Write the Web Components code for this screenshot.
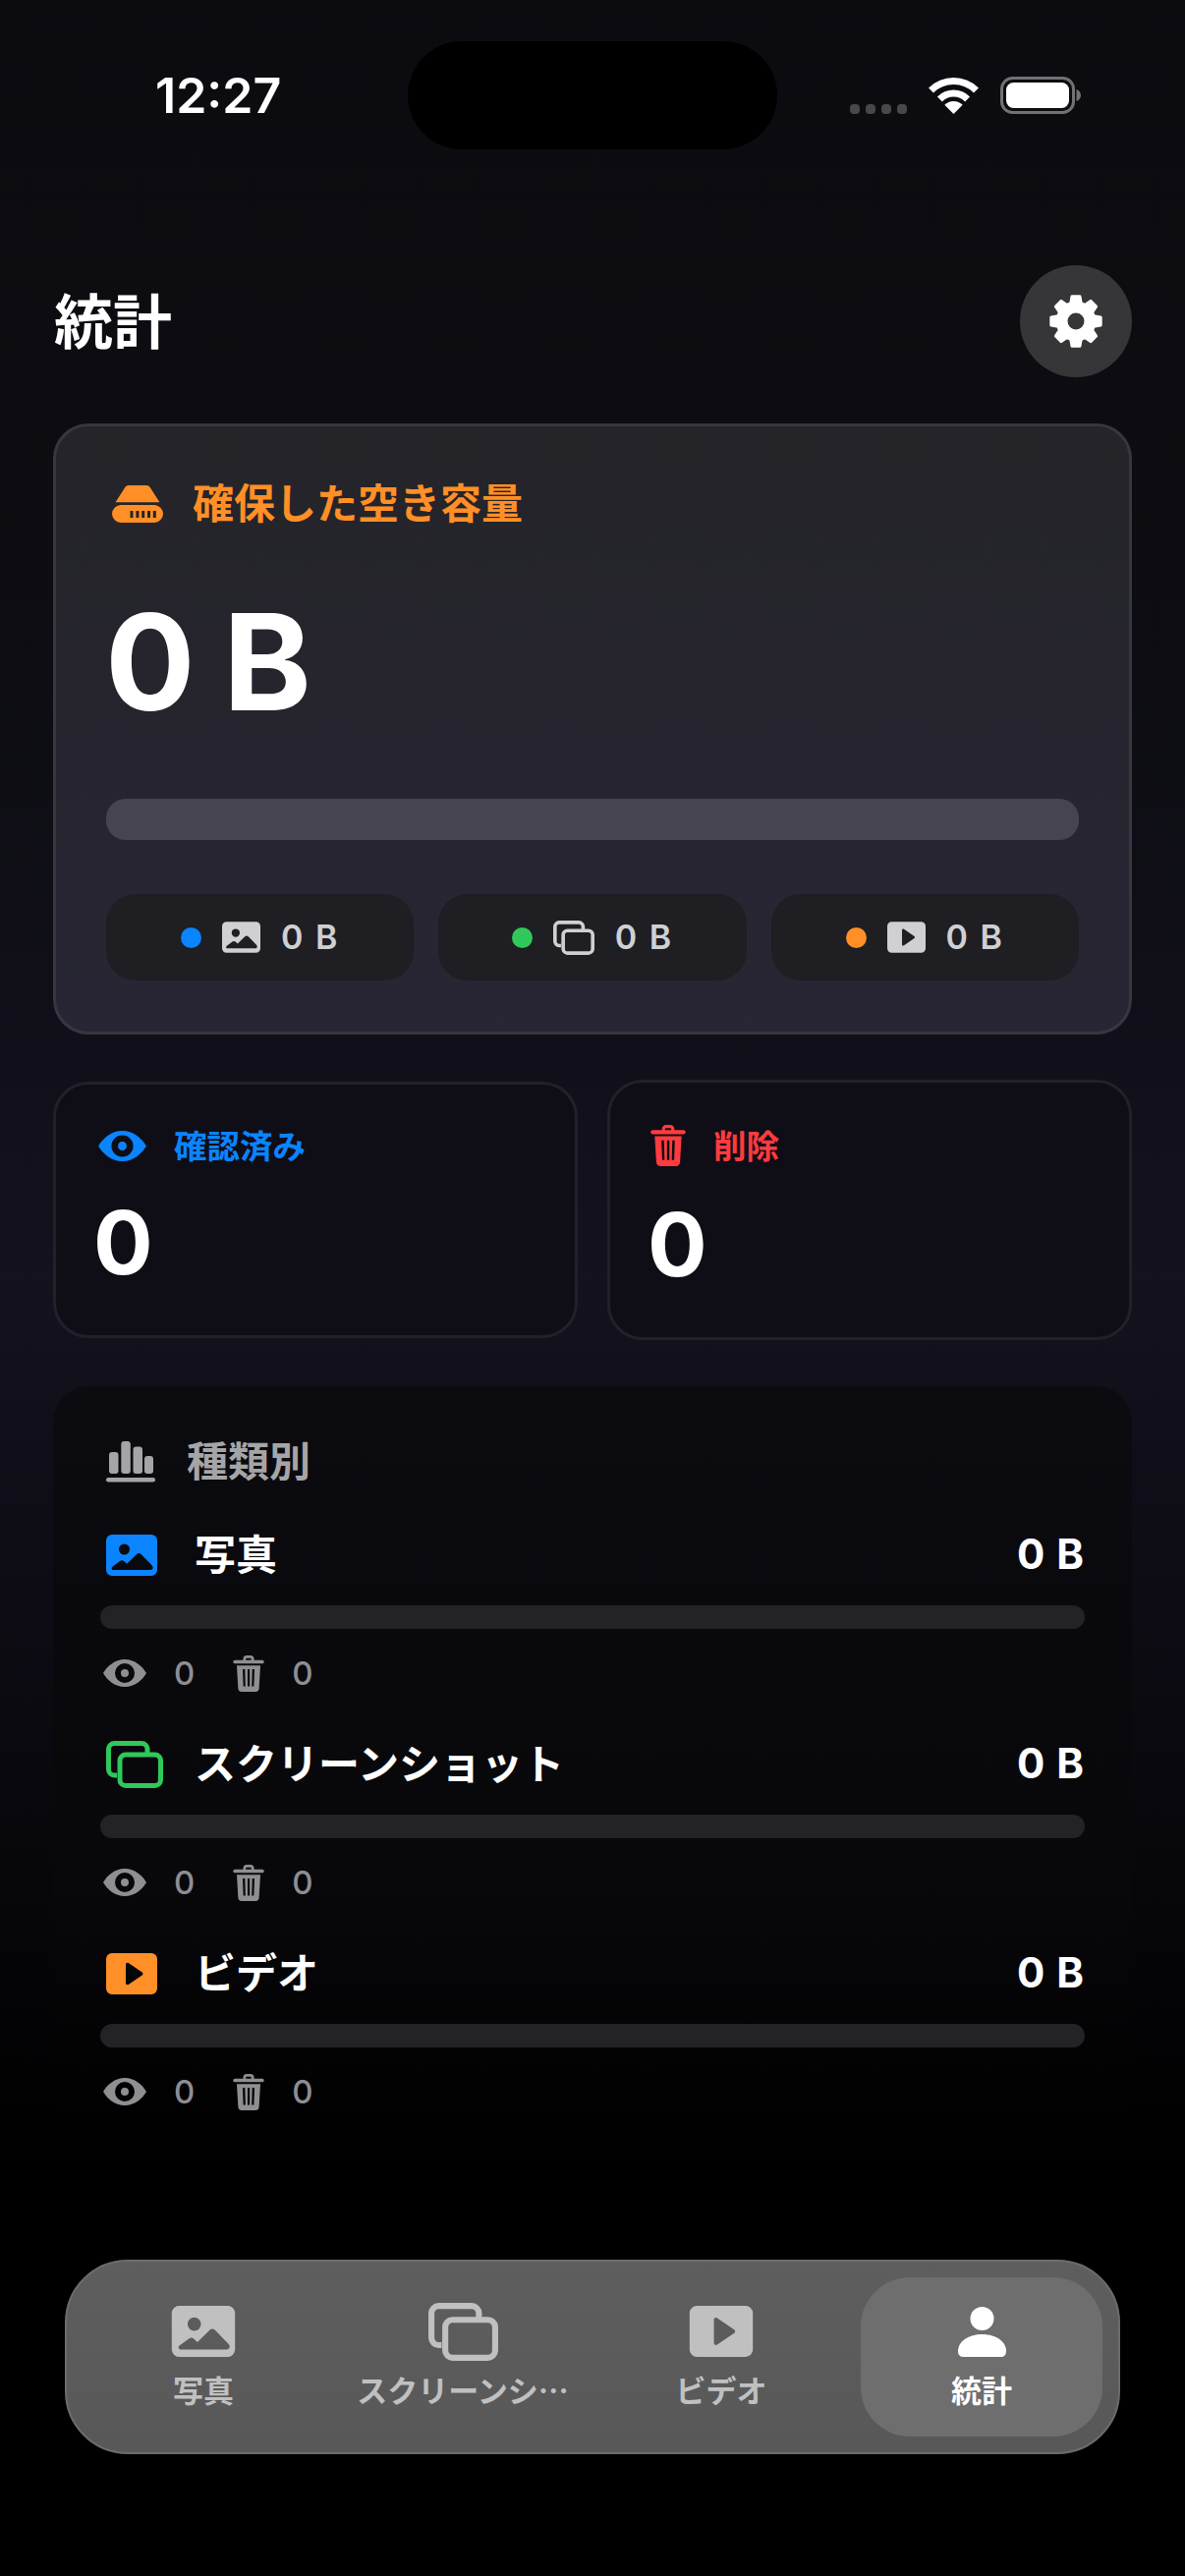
<!DOCTYPE html>
<html lang="ja">
<head>
<meta charset="utf-8">
<title>統計</title>
<style>
  html, body { margin: 0; padding: 0; background: #000; }
  body { font-family: Inter, "Noto Sans CJK JP", sans-serif; color: #fff; }
</style>
</head>
<body>
<app-screen>
  <status-bar time="12:27"></status-bar>
  <page-header title="統計"></page-header>
  <saved-card title="確保した空き容量" value="0 B">
    <stat-chip dot="#0a84ff" icon="photo" value="0 B"></stat-chip>
    <stat-chip dot="#30c85a" icon="shots" value="0 B"></stat-chip>
    <stat-chip dot="#ff8f26" icon="video" value="0 B"></stat-chip>
  </saved-card>
  <count-row>
    <count-card icon="eye" color="#0a84ff" label="確認済み" value="0"></count-card>
    <count-card tall icon="trash" color="#ff3b3f" label="削除" value="0"></count-card>
  </count-row>
  <type-panel title="種類別">
    <type-row icon="photo" color="#0a84ff" label="写真" size="0 B" seen="0" removed="0"></type-row>
    <type-row icon="shots" color="#30c85a" label="スクリーンショット" size="0 B" seen="0" removed="0"></type-row>
    <type-row icon="video" color="#ff8f26" label="ビデオ" size="0 B" seen="0" removed="0"></type-row>
  </type-panel>
  <tab-bar>
    <tab-item icon="photo" label="写真" width="244"></tab-item>
    <tab-item icon="shots" label="スクリーンシ…" width="284"></tab-item>
    <tab-item icon="video" label="ビデオ" width="242"></tab-item>
    <tab-item icon="person" label="統計" width="246" active></tab-item>
  </tab-bar>
</app-screen>

<script>
// 8 teeth with rounded corners (the stroke rounds them), hole in the middle
function gearPath() {
  const point = (deg, r) => {
    const a = (deg * Math.PI) / 180;
    return `${(27 + r * Math.cos(a)).toFixed(2)} ${(27 + r * Math.sin(a)).toFixed(2)}`;
  };
  let d = "";
  for (let i = 0; i < 8; i++) {
    const a = i * 45 - 90;
    d += `${i ? "L" : "M"}${point(a - 16, 19)}L${point(a - 9, 25.5)}L${point(a + 9, 25.5)}L${point(a + 16, 19)}`;
  }
  return `${d}Z M27 17a10 10 0 1 0 0 20 10 10 0 0 0 0-20z`;
}

// All icons live here, keyed by name. w/h are the default drawn size.
const ICONS = {
  photo: { w: 52, h: 42, body: `<path fill-rule="evenodd" d="M6 0h40a6 6 0 0 1 6 6v30a6 6 0 0 1-6 6H6a6 6 0 0 1-6-6V6a6 6 0 0 1 6-6zM18.500 9.500a5.500 5.500 0 1 0 0 11 5.500 5.500 0 0 0 0-11zM7 36h38c1.800 0 2.600-1.200 2.600-2.400 0-.9-.4-1.600-1-2.300l-11-11.300c-1.300-1.300-3.200-1.300-4.500 0l-10 9.800-3-2.800c-1.200-1-2.900-1-4.100 0L6 33c-.9 1-.3 3 1 3z"/>` },
  shots: { w: 58, h: 48, body: `<g fill="none" stroke="currentColor" stroke-width="5"><path d="M11 35h-2.500A6 6 0 0 1 2.500 29V8.500a6 6 0 0 1 6-6H36a6 6 0 0 1 6 6V13"/><rect x="14" y="14" width="41.500" height="31.500" rx="6"/></g>` },
  video: { w: 52, h: 42, body: `<path fill-rule="evenodd" d="M6 0h40a6 6 0 0 1 6 6v30a6 6 0 0 1-6 6H6a6 6 0 0 1-6-6V6a6 6 0 0 1 6-6zM20 11.500v19c0 1.400 1.500 2.200 2.700 1.400l14-9.500c1-.7 1-2.100 0-2.800l-14-9.500c-1.200-.8-2.700 0-2.700 1.400z"/>` },
  person: { w: 49, h: 51, body: `<circle cx="24.500" cy="12" r="12"/><path d="M0 45c0-10 11-17 24.500-17S49 35 49 45c0 4-2 6-6 6H6c-4 0-6-2-6-6z"/>` },
  eye: { w: 44, h: 28, body: `<path fill-rule="evenodd" d="M22 0c10 0 18 7 22 14-4 7-12 14-22 14S4 21 0 14C4 7 12 0 22 0zm0 4a10 10 0 1 0 0 20 10 10 0 0 0 0-20zm0 6a4 4 0 1 1 0 8 4 4 0 0 1 0-8z"/>` },
  trash: { w: 34, h: 40, body: `<path fill-rule="evenodd" d="M11 5V4a4 4 0 0 1 4-4h4a4 4 0 0 1 4 4v1h9a2 2 0 0 1 0 4H2a2 2 0 0 1 0-4h9zm3 0h6V4a1 1 0 0 0-1-1h-4a1 1 0 0 0-1 1v1zM4 11h26l-1.500 25a4 4 0 0 1-4 4h-15a4 4 0 0 1-4-4L4 11zm6.500 4 .7 19h2.300l-.5-19h-2.500zm5.400 0v19h2.300v-19h-2.300zm5.100 0-.5 19h2.300l.7-19H21z"/>` },
  chart: { w: 50, h: 42, body: `<rect x="3" y="11" width="9.500" height="22" rx="3"/><rect x="15.300" y="0" width="9.500" height="33" rx="3"/><rect x="27.500" y="5.500" width="9.500" height="27.500" rx="3"/><rect x="39" y="15" width="9" height="18" rx="3"/><rect x="0" y="37" width="50" height="4.500" rx="2.200"/>` },
  disk: { w: 52, h: 38, body: `<path d="M13 2.500C13.700.8 15.500 0 17 0h18c1.500 0 3.300.8 4 2.500l9.500 14.800H3.500z"/><path fill-rule="evenodd" d="M9 20h34a9 9 0 0 1 0 18H9a9 9 0 0 1 0-18zm9.500 6v7h3v-7zm5.900 0v7h3v-7zm5.800 0v7h3v-7zm5.800 0v7h3v-7zm5.800 0v7h3v-7z"/>` },
  gear: { w: 54, h: 54, body: `<path fill-rule="evenodd" stroke="currentColor" stroke-width="3" stroke-linejoin="round" d="${gearPath()}"/>` }
};

function defineElement(name, css, render) {
  customElements.define(name, class extends HTMLElement {
    constructor() {
      super();
      this.attachShadow({ mode: "open" });
    }
    connectedCallback() {
      this.shadowRoot.innerHTML = `<style>${css}</style>${render(this)}`;
    }
  });
}

// <app-icon name="photo" w="52" h="42">, takes the text colour
class AppIcon extends HTMLElement {
  constructor() {
    super();
    this.attachShadow({ mode: "open" });
  }
  connectedCallback() {
    const icon = ICONS[this.getAttribute("name")];
    const w = this.getAttribute("w") || icon.w;
    const h = this.getAttribute("h") || icon.h;
    this.shadowRoot.innerHTML = `
      <style>
        :host { display: block; flex: none; line-height: 0; }
        svg { display: block; overflow: visible; fill: currentColor; }
      </style>
      <svg width="${w}" height="${h}" viewBox="0 0 ${icon.w} ${icon.h}">${icon.body}</svg>`;
  }
}
customElements.define("app-icon", AppIcon);

defineElement("app-screen", `
  :host {
    display: flex; flex-direction: column; box-sizing: border-box;
    width: 1206px; height: 2622px; overflow: hidden;
    background: linear-gradient(180deg, #0b0b10 0, #0d0d13 700px, #13121e 1300px, #0d0c14 1650px, #000 2200px);
  }
`, () => `<slot></slot>`);

defineElement("status-bar", `
  :host {
    display: grid; grid-template-columns: 415px 376px 1fr; align-items: center;
    box-sizing: border-box; height: 152px; padding-top: 42px;
  }
  .time { padding-left: 158px; font: 600 50px/1 Inter, sans-serif; color: #fff; }
  .island { height: 110px; border-radius: 55px; background: #000; }
  .right { display: flex; align-items: flex-end; padding-left: 74px; height: 38px; }
  .dots { display: flex; gap: 6px; margin-right: 22px; }
  .dots i { width: 10px; height: 10px; border-radius: 4px; background: #48484c; }
  svg { display: block; overflow: visible; }
  .wifi { margin-right: 22px; }
`, (el) => `
  <div class="time">${el.getAttribute("time")}</div>
  <div class="island"></div>
  <div class="right">
    <div class="dots"><i></i><i></i><i></i><i></i></div>
    <svg class="wifi" width="51" height="37" viewBox="0 0 51 37" fill="none" stroke="#fff" stroke-width="7">
      <path d="M2.500 13a32.500 32.500 0 0 1 46 0"/>
      <path d="M11.400 21.900a20 20 0 0 1 28.200 0"/>
      <path stroke="none" fill="#fff" d="M25.500 37l-9.200-9.200a13 13 0 0 1 18.400 0z"/>
    </svg>
    <svg width="82" height="38" viewBox="0 0 82 38">
      <rect x="1.500" y="1.500" width="73" height="35" rx="11" fill="none" stroke="#727276" stroke-width="3"/>
      <rect x="6" y="6" width="64" height="26" rx="7.500" fill="#fff"/>
      <path d="M77.500 13c2.600.8 4.500 3 4.500 6s-1.900 5.200-4.500 6z" fill="#727276"/>
    </svg>
  </div>
`);

defineElement("page-header", `
  :host {
    display: flex; justify-content: space-between; align-items: center;
    box-sizing: border-box; height: 114px; margin-top: 118px; padding: 0 54px 0 55px;
  }
  h1 { margin: 0 0 6px; font: 700 60px/1 "Noto Sans CJK JP", sans-serif; color: #fff; }
  button {
    display: flex; align-items: center; justify-content: center;
    width: 114px; height: 114px; padding: 0; border: 0; border-radius: 50%;
    background: #363639; color: #fff;
  }
`, (el) => `
  <h1>${el.getAttribute("title")}</h1>
  <button><app-icon name="gear"></app-icon></button>
`);

defineElement("saved-card", `
  :host {
    display: block; box-sizing: border-box; height: 622px; margin: 47px 54px 0;
    padding: 58px 51px 52px; border: 3px solid #37373f; border-radius: 36px;
    background: linear-gradient(180deg, #242429, #282634);
  }
  .head { display: flex; align-items: center; gap: 31px; height: 42px; padding-left: 6px; color: #ff8f26; }
  .title { margin-bottom: 6px; margin-left: -1px; font: 700 42px/42px "Noto Sans CJK JP", sans-serif; }
  .value { display: flex; align-items: center; height: 279px; margin-left: -1px; letter-spacing: -2px; font: 700 136px/1 Inter, sans-serif; color: #fff; }
  .bar { height: 42px; border-radius: 20px; background: #46454f; }
  .chips { display: grid; grid-template-columns: repeat(3, 1fr); gap: 25px; margin-top: 55px; }
`, (el) => `
  <div class="head">
    <app-icon name="disk"></app-icon>
    <span class="title">${el.getAttribute("title")}</span>
  </div>
  <div class="value">${el.getAttribute("value")}</div>
  <div class="bar"></div>
  <div class="chips"><slot></slot></div>
`);

defineElement("stat-chip", `
  :host {
    display: flex; align-items: center; justify-content: center; gap: 21px;
    height: 88px; border-radius: 30px; background: #1e1e23; color: #d0d0d2;
  }
  .dot { width: 21px; height: 21px; border-radius: 50%; }
  .value { font: 600 34px/1 Inter, sans-serif; letter-spacing: 2px; }
`, (el) => `
  <span class="dot" style="background:${el.getAttribute("dot")}"></span>
  <app-icon name="${el.getAttribute("icon")}" w="${el.getAttribute("icon") === "shots" ? 42 : 39}" h="${el.getAttribute("icon") === "shots" ? 35 : 32}"></app-icon>
  <span class="value">${el.getAttribute("value")}</span>
`);

defineElement("count-row", `
  :host {
    display: grid; grid-template-columns: 534px 534px; gap: 30px; align-items: center;
    margin: 46px 54px 0;
  }
`, () => `<slot></slot>`);

defineElement("count-card", `
  :host {
    display: block; box-sizing: border-box; height: 261px; padding: 41px 43px 0;
    border: 3px solid #22212a; border-radius: 36px; background: #0f0e17;
  }
  :host([tall]) { height: 265px; padding: 43px 41px 0; }
  .head { display: flex; align-items: center; gap: 28px; height: 42px; }
  .label { margin-bottom: 3px; font: 700 33.500px/42px "Noto Sans CJK JP", sans-serif; }
  .value { margin: 33px 0 0 -5px; font: 700 90px/90px Inter, sans-serif; color: #fff; }
  :host([tall]) .value { margin: 35px 0 0 -3px; }
`, (el) => {
  const icon = el.getAttribute("icon");
  const size = icon === "eye" ? `w="49" h="31"` : `w="36" h="42"`;
  return `
  <div class="head" style="color:${el.getAttribute("color")}">
    <app-icon name="${icon}" ${size}></app-icon>
    <span class="label">${el.getAttribute("label")}</span>
  </div>
  <div class="value">${el.getAttribute("value")}</div>`;
});

defineElement("type-panel", `
  :host {
    display: block; box-sizing: border-box; height: 780px; margin: 47px 54px 0;
    padding: 55px 48px 0; border-radius: 36px;
    background: linear-gradient(180deg, #0b0b10, #08080b 500px, #000);
  }
  .head { display: flex; align-items: center; gap: 32px; height: 44px; margin-bottom: 50px; padding-left: 6px; color: #a5a5a7; }
  .title { margin-bottom: 6px; font: 700 42px/44px "Noto Sans CJK JP", sans-serif; }
`, (el) => `
  <div class="head">
    <app-icon name="chart"></app-icon>
    <span class="title">${el.getAttribute("title")}</span>
  </div>
  <slot></slot>
`);

defineElement("type-row", `
  :host { display: block; height: 213px; }
  .top { display: flex; align-items: center; height: 46px; padding-left: 6px; }
  .slot { width: 90px; flex: none; }
  .label { flex: 1; margin-bottom: 6px; font: 700 42px/46px "Noto Sans CJK JP", sans-serif; color: #fff; }
  .size { margin-bottom: 2px; font: 700 42px/46px Inter, sans-serif; letter-spacing: 1px; color: #fff; }
  .bar { height: 24px; margin-top: 28px; border-radius: 12px; background: #232326; }
  .stats { display: flex; align-items: center; height: 36px; margin-top: 27px; padding-left: 3px; color: #8e8e93; }
  .num { font: 500 33px/36px Inter, sans-serif; margin-left: 28px; }
  .stats app-icon + .num + app-icon { margin-left: 39px; }
`, (el) => `
  <div class="top">
    <div class="slot" style="color:${el.getAttribute("color")}"><app-icon name="${el.getAttribute("icon")}"></app-icon></div>
    <span class="label">${el.getAttribute("label")}</span>
    <span class="size">${el.getAttribute("size")}</span>
  </div>
  <div class="bar"></div>
  <div class="stats">
    <app-icon name="eye"></app-icon>
    <span class="num">${el.getAttribute("seen")}</span>
    <app-icon name="trash" w="32" h="37"></app-icon>
    <span class="num">${el.getAttribute("removed")}</span>
  </div>
`);

defineElement("tab-bar", `
  :host {
    display: flex; box-sizing: border-box; height: 198px; margin: auto 66px 124px;
    padding: 16px 16px 16px 17px; border: 2px solid #6c6c6c; border-radius: 64px;
    background: linear-gradient(180deg, #5e5e5e, #585858);
  }
`, () => `<slot></slot>`);

defineElement("tab-item", `
  :host {
    display: flex; flex-direction: column; align-items: center; box-sizing: border-box; flex: none;
    height: 162px; padding-top: 25px; color: #c0c0c0;
  }
  :host([active]) { margin-left: 21px; border-radius: 50px; background: #6e6e6e; color: #fff; }
  .icon { display: flex; align-items: center; height: 60px; }
  .label { margin-top: 9px; font: 700 31px/40px "Noto Sans CJK JP", sans-serif; white-space: nowrap; }
`, (el) => {
  const icon = el.getAttribute("icon");
  const size = icon === "shots" ? `w="71" h="59"` : icon === "person" ? "" : `w="66" h="52"`;
  return `
  <style>:host { width: ${el.getAttribute("width")}px; }</style>
  <div class="icon"><app-icon name="${icon}" ${size}></app-icon></div>
  <div class="label">${el.getAttribute("label")}</div>`;
});
</script>
</body>
</html>
